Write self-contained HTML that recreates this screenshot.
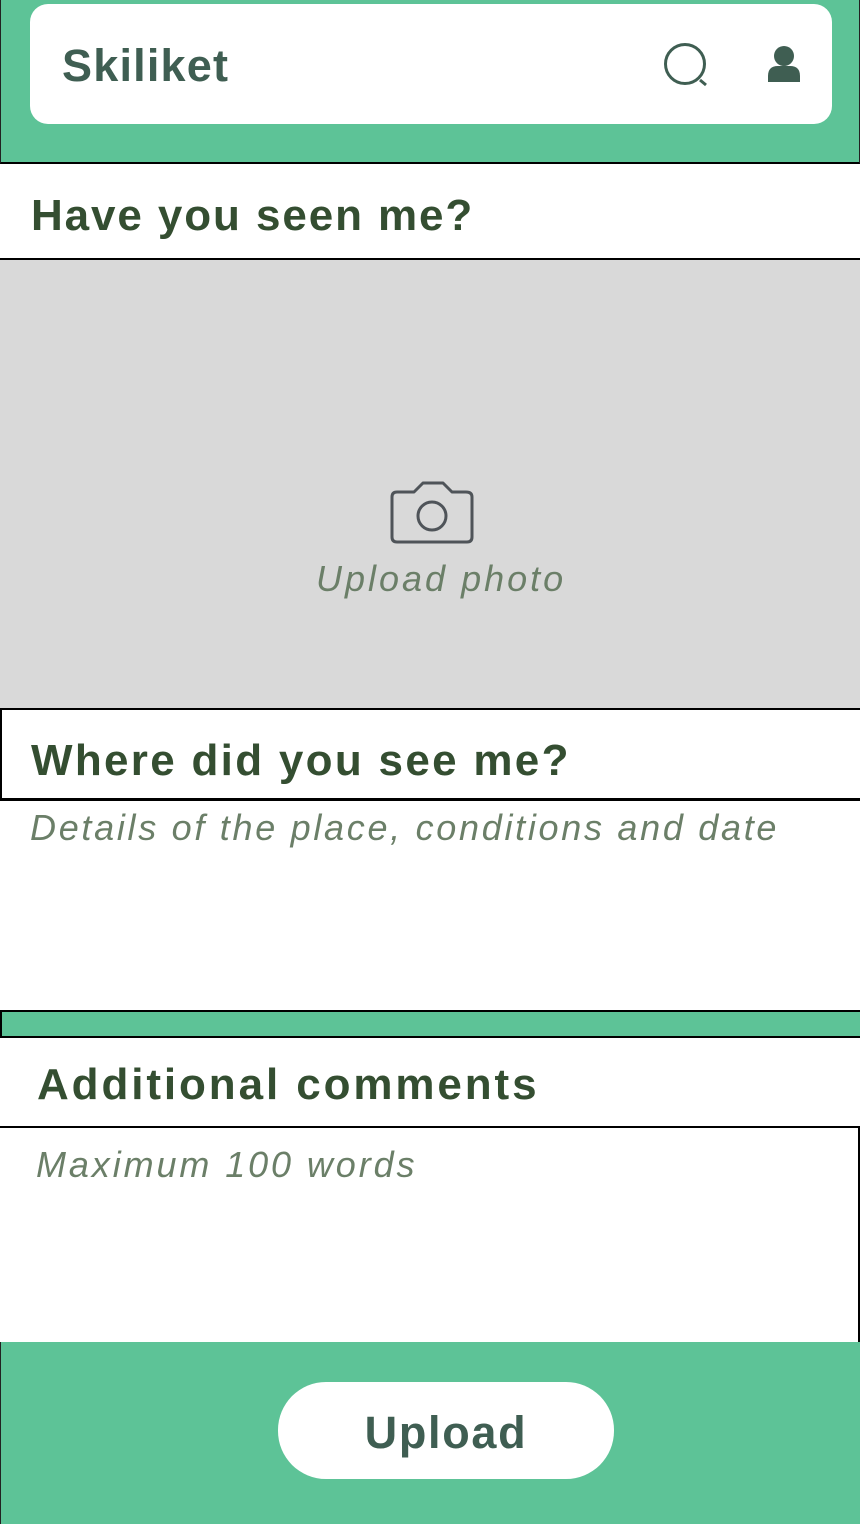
<!DOCTYPE html>
<html><head><meta charset="utf-8"><style>
*{margin:0;padding:0;box-sizing:border-box}
body{width:860px;height:1524px;position:relative;background:#fff;font-family:"Liberation Sans",sans-serif;overflow:hidden}
.a{position:absolute}
h2{position:absolute;font-weight:bold;color:#344E31;font-size:44px;letter-spacing:1.9px;white-space:nowrap}
.it{position:absolute;font-style:italic;color:#6B7F68;font-size:36px;letter-spacing:2.7px;white-space:nowrap}
</style></head><body>
<div class="a" style="left:0;top:0;width:860px;height:164px;background:#5DC397;border-left:1px solid #222;border-right:1px solid #222;border-bottom:2px solid #000"></div>
<div class="a" style="left:30px;top:4px;width:802px;height:120px;background:#fff;border-radius:18px"></div>
<div class="a" style="left:62px;top:40px;font-size:45px;font-weight:bold;color:#3F5E52;letter-spacing:1.2px">Skiliket</div>
<svg class="a" style="left:0;top:0" width="860" height="130">
<circle cx="685" cy="64" r="19.5" fill="none" stroke="#3F5E52" stroke-width="3"/>
<line x1="700" y1="80" x2="706" y2="85" stroke="#3F5E52" stroke-width="3"/>
<circle cx="784" cy="56" r="10" fill="#3F5E52"/>
<path d="M768 82 L800 82 L800 76 Q800 66 790 66 L778 66 Q768 66 768 76 Z" fill="#3F5E52"/>
</svg>
<h2 style="left:31px;top:191px">Have you seen me?</h2>
<div class="a" style="left:0;top:258px;width:860px;height:2px;background:#000"></div>
<div class="a" style="left:0;top:260px;width:860px;height:448px;background:#D9D9D9"></div>
<svg class="a" style="left:388px;top:480px" width="90" height="66">
<path d="M4 17 Q4 12 9 12 L26 12 L35 3 L55 3 L64 12 L78 12 Q84 12 84 17 L84 57 Q84 62 79 62 L9 62 Q4 62 4 57 Z" fill="none" stroke="#4F5459" stroke-width="3" stroke-linejoin="round"/>
<circle cx="44" cy="36" r="14" fill="none" stroke="#4F5459" stroke-width="3"/>
</svg>
<div class="it" style="left:316px;top:558px;letter-spacing:3px">Upload photo</div>
<div class="a" style="left:0;top:708px;width:862px;height:93px;border:2px solid #000;border-bottom-width:3px"></div>
<h2 style="left:31px;top:736px;letter-spacing:2.3px">Where did you see me?</h2>
<div class="it" style="left:30px;top:807px;letter-spacing:2.7px">Details of the place, conditions and date</div>
<div class="a" style="left:0;top:1010px;width:862px;height:28px;background:#5DC397;border:2px solid #000"></div>
<h2 style="left:37px;top:1060px;letter-spacing:2.9px">Additional comments</h2>
<div class="a" style="left:0;top:1126px;width:860px;height:2px;background:#000"></div>
<div class="a" style="left:858px;top:1126px;width:2px;height:216px;background:#000"></div>
<div class="it" style="left:36px;top:1144px;letter-spacing:2.9px">Maximum 100 words</div>
<div class="a" style="left:0;top:1342px;width:860px;height:182px;background:#5DC397;border-left:1px solid #222"></div>
<div class="a" style="left:278px;top:1382px;width:336px;height:97px;background:#fff;border-radius:48px;text-align:center;line-height:101px;font-size:45px;font-weight:bold;color:#3F5E52;letter-spacing:1.7px">Upload</div>
</body></html>
